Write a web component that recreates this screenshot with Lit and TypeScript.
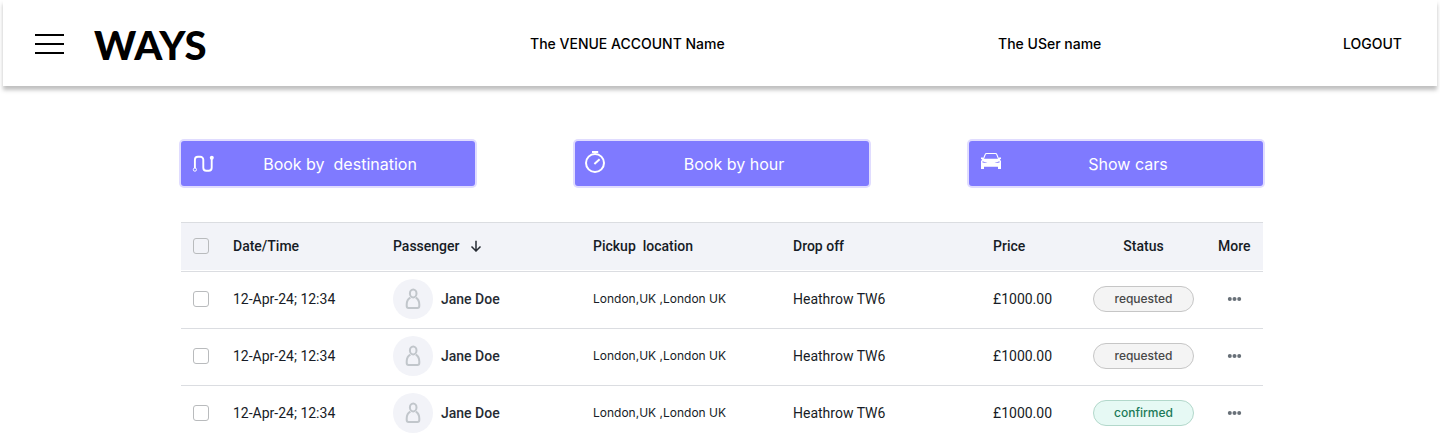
import { LitElement, html, css, svg } from "lit";
import { customElement, property } from "lit/decorators.js";
import { classMap } from "lit/directives/class-map.js";

type Status = "requested" | "confirmed";

interface Booking {
  id: number;
  time: string;
  passenger: string;
  pickup: string;
  dropOff: string;
  price: string;
  status: Status;
}

const bookings: Booking[] = (["requested", "requested", "confirmed"] as Status[]).map(
  (status, i) => ({
    id: i + 1,
    time: "12-Apr-24; 12:34",
    passenger: "Jane Doe",
    pickup: "London,UK ,London UK",
    dropOff: "Heathrow TW6",
    price: "£1000.00",
    status,
  })
);

const routeIcon = svg`
  <path d="M3.900 17V8.800a3 3 0 0 1 3-3h2.400a3 3 0 0 1 3 3v8a3 3 0 0 0 3 3h2.400a3 3 0 0 0 3-3V7" fill="none" stroke="#fff" stroke-width="1.900"/>
  <circle cx="3.900" cy="18.600" r="1.600" fill="none" stroke="#fff" stroke-width="1"/>
  <circle cx="20.800" cy="6.800" r="2" fill="#fff"/>`;

const timerIcon = svg`
  <circle cx="10" cy="12" r="9" fill="none" stroke="#fff" stroke-width="2"/>
  <path d="M7 1h6.2" stroke="#fff" stroke-width="2"/>
  <path d="M9.400 13l5.200-4.700" stroke="#fff" stroke-width="2"/>`;

const carIcon = svg`
  <path d="M4.400 8L6.300 3.300Q6.600 2.500 7.500 2.500h9q.9 0 1.200.8L19.600 8" fill="none" stroke="#fff" stroke-width="1.100"/>
  <path fill-rule="evenodd" fill="#fff" d="M4.600 7.800h14.800l.8-1.300H22V8l-1.300.5L22 10v8h-3v-2.200H5V18H2v-8l1.300-1.500L2 8V6.500h1.800zM3.500 10.200v1.300l3.600.6h1.300zM20.500 10.200v1.300l-3.600.6h-1.300z"/>`;

@customElement("action-button")
class ActionButton extends LitElement {
  @property() label = "";
  @property({ attribute: false }) icon: unknown;

  static styles = css`
    :host {
      display: block;
    }
    .action {
      display: flex;
      align-items: center;
      width: 100%;
      height: 45px;
      padding: 0 10px;
      border: 0;
      border-radius: 3px;
      background: #7f7aff;
      box-shadow: 0 0 0 2px #e0dcff;
      color: #fff;
      font: 400 16px/24px Inter, sans-serif;
      cursor: pointer;
    }
    .icon {
      flex: none;
      width: 24px;
      height: 25px;
    }
    .label {
      flex: 1;
      text-align: center;
      white-space: pre;
    }
  `;

  render() {
    return html`<button class="action" type="button">
      <svg class="icon" viewBox="0 0 24 25" aria-hidden="true">${this.icon}</svg>
      <span class="label">${this.label}</span>
    </button>`;
  }
}

@customElement("booking-table")
class BookingTable extends LitElement {
  @property({ attribute: false }) rows: Booking[] = [];

  static styles = css`
    :host {
      display: block;
    }
    .table {
      width: 100%;
      table-layout: fixed;
      border-collapse: separate;
      border-spacing: 0;
      color: #171c26;
      font: 400 14px/20px Roboto, sans-serif;
    }
    .c-check { width: 40px; }
    .c-time { width: 160px; }
    .c-wide { width: 200px; }
    .c-price { width: 100px; }
    .c-status { width: 125px; }
    .c-more { width: 57px; }
    th,
    td {
      box-sizing: border-box;
      padding: 0 12px 2px;
      text-align: left;
      vertical-align: middle;
      white-space: pre;
      border-bottom: 1px solid #dbdde1;
    }
    th {
      height: 50px;
      font-weight: 500;
      background: #f2f3f8;
      border-top: 1px solid #dbdde1;
      box-shadow: inset 0 -1px #fff;
    }
    td {
      height: 57px;
    }
    .last td {
      border-bottom-color: transparent;
    }
    .center {
      text-align: center;
    }
    .check {
      appearance: none;
      display: block;
      box-sizing: border-box;
      width: 16px;
      height: 16px;
      margin: 0;
      border: 1px solid #b9bbbd;
      border-radius: 3px;
      background: #fff;
    }
    .head-check {
      background: transparent;
    }
    .sort {
      display: flex;
      align-items: center;
      gap: 10px;
      padding: 0;
      border: 0;
      background: none;
      color: inherit;
      font: inherit;
      cursor: pointer;
    }
    .arrow {
      width: 12px;
      height: 12px;
    }
    .person {
      display: flex;
      align-items: center;
      gap: 8px;
      font-weight: 500;
      color: #262b33;
    }
    .avatar {
      width: 40px;
      height: 40px;
    }
    .pickup {
      font: 400 12px/20px Inter, sans-serif;
    }
    .status {
      display: block;
      box-sizing: border-box;
      height: 26px;
      border: 1px solid #c6c6c6;
      border-radius: 13px;
      background: #f4f4f4;
      color: #484848;
      font: 500 12px/24px Inter, sans-serif;
      text-align: center;
    }
    .status.confirmed {
      border-color: #b2d8cb;
      background: #e6f9f4;
      color: #1c7a58;
    }
    .more {
      display: block;
      width: 32px;
      height: 20px;
      padding: 0;
      border: 0;
      background: none;
      cursor: pointer;
    }
    .dots {
      display: block;
      width: 32px;
      height: 20px;
    }
  `;

  private row(b: Booking, last: boolean) {
    return html`<tr class=${classMap({ last })}>
      <td><input class="check" type="checkbox" aria-label="Select booking ${b.id}" /></td>
      <td>${b.time}</td>
      <td><div class="person"><svg class="avatar" viewBox="0 0 40 40" aria-hidden="true">
        <circle cx="20" cy="20" r="20" fill="#f2f3f8"/>
        <g fill="none" stroke="#c1c6cb" stroke-width="2">
          <ellipse cx="20.200" cy="14.400" rx="3.300" ry="4"/>
          <path d="M17.400 18.600c-2.500 1.300-3.700 3.900-3.700 7v1.400c0 1 .9 1.900 1.900 1.900h8.800c1 0 1.900-.9 1.900-1.900v-1.400c0-3.100-1.200-5.700-3.500-7"/>
        </g></svg><span>${b.passenger}</span></div></td>
      <td class="pickup">${b.pickup}</td>
      <td>${b.dropOff}</td>
      <td>${b.price}</td>
      <td><span class=${classMap({ status: true, confirmed: b.status === "confirmed" })}>${b.status}</span></td>
      <td><button class="more" type="button" aria-label="More actions"><svg class="dots" viewBox="0 0 32 20" fill="#687078">
        <circle cx="11.800" cy="10" r="2"/><circle cx="16.500" cy="10" r="2"/><circle cx="21.200" cy="10" r="2"/>
      </svg></button></td>
    </tr>`;
  }

  render() {
    return html`<table class="table">
      <colgroup>
        <col class="c-check" /><col class="c-time" /><col class="c-wide" /><col class="c-wide" />
        <col class="c-wide" /><col class="c-price" /><col class="c-status" /><col class="c-more" />
      </colgroup>
      <thead>
        <tr>
          <th><input class="check head-check" type="checkbox" aria-label="Select all bookings" /></th>
          <th>Date/Time</th>
          <th><button class="sort" type="button">Passenger<svg class="arrow" viewBox="0 0 12 12" fill="none" stroke="#262b33" stroke-width="1.5" aria-hidden="true"><path d="M6 .8v10M1.500 6.500L6 11l4.500-4.500"/></svg></button></th>
          <th>Pickup  location</th>
          <th>Drop off</th>
          <th>Price</th>
          <th class="center">Status</th>
          <th>More</th>
        </tr>
      </thead>
      <tbody>
        ${this.rows.map((b, i) => this.row(b, i === this.rows.length - 1))}
      </tbody>
    </table>`;
  }
}

@customElement("app-root")
class AppRoot extends LitElement {
  static styles = css`
    :host {
      display: block;
      background: #fff;
      color: #000;
      font: 500 14px/20px Inter, sans-serif;
    }
    .bar {
      display: grid;
      grid-template-columns: 495fr 468fr 345fr 59fr;
      align-items: center;
      box-sizing: border-box;
      height: 86px;
      margin: 0 3px;
      padding: 2px 35px 0 32px;
      background: #fff;
      box-shadow: 0 4px 4px rgba(0, 0, 0, 0.25);
    }
    .brand {
      display: flex;
      align-items: center;
      gap: 30px;
    }
    .menu {
      padding: 0;
      border: 0;
      background: none;
      cursor: pointer;
    }
    .lines {
      display: block;
      width: 29px;
      height: 20px;
    }
    .logo {
      padding-top: 2px;
      color: #000;
      font: 900 40px/48px Lato, sans-serif;
      text-decoration: none;
    }
    .logout {
      justify-self: end;
      color: #000;
      text-decoration: none;
    }
    .content {
      max-width: 1082px;
      margin: 0 auto;
      padding: 55px 0 0 4px;
    }
    .actions {
      display: grid;
      grid-template-columns: repeat(3, 1fr);
      gap: 100px;
      margin-bottom: 36px;
    }
  `;

  render() {
    return html`
      <header class="bar">
        <div class="brand">
          <button class="menu" type="button" aria-label="Menu">
            <svg class="lines" viewBox="0 0 29 20" stroke="#000" stroke-width="2"><path d="M0 1h29M0 10h29M0 19h29"/></svg>
          </button>
          <a class="logo" href="#">WAYS</a>
        </div>
        <span>The VENUE ACCOUNT Name</span>
        <span>The USer name</span>
        <a class="logout" href="#">LOGOUT</a>
      </header>
      <main class="content">
        <div class="actions">
          <action-button label="Book by  destination" .icon=${routeIcon}></action-button>
          <action-button label="Book by hour" .icon=${timerIcon}></action-button>
          <action-button label="Show cars" .icon=${carIcon}></action-button>
        </div>
        <booking-table .rows=${bookings}></booking-table>
      </main>
    `;
  }
}
